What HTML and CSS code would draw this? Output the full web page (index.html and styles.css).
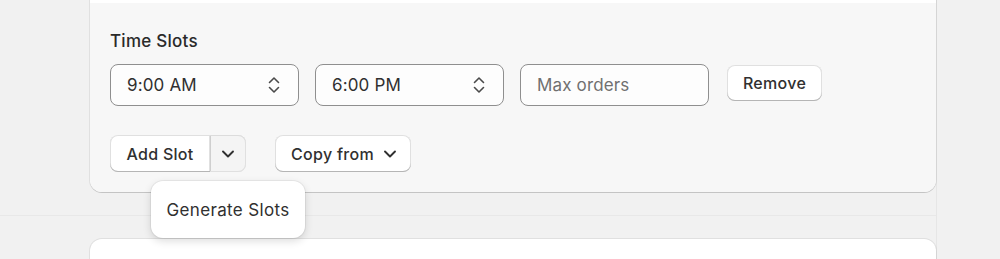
FILE: index.html
```html
<!DOCTYPE html>
<html>
<head>
<meta charset="utf-8">
<link rel="stylesheet" href="styles.css">
</head>
<body>
<div class="page">
  <section class="card card-first">
    <div class="card-top"></div>
    <div class="card-section">
      <div class="label">Time Slots</div>
      <div class="slot-row">
        <div class="select">
          <span>9:00 AM</span>
          <svg class="updown" viewBox="0 0 20 20" width="20" height="20"><path d="M5.5 7.5 10 3l4.5 4.5M5.5 12.5 10 17l4.5-4.5" fill="none" stroke="#4a4a4a" stroke-width="1.6" stroke-linecap="round" stroke-linejoin="round"/></svg>
        </div>
        <div class="select">
          <span>6:00 PM</span>
          <svg class="updown" viewBox="0 0 20 20" width="20" height="20"><path d="M5.5 7.5 10 3l4.5 4.5M5.5 12.5 10 17l4.5-4.5" fill="none" stroke="#4a4a4a" stroke-width="1.6" stroke-linecap="round" stroke-linejoin="round"/></svg>
        </div>
        <div class="input"><span class="placeholder">Max orders</span></div>
        <button class="btn btn-remove">Remove</button>
      </div>
      <div class="action-row">
        <div class="btn-group">
          <button class="btn btn-main">Add Slot</button>
          <button class="btn btn-disclosure">
            <svg viewBox="0 0 20 20" width="20" height="20"><path d="M5 7.5l5 5 5-5" fill="none" stroke="#303030" stroke-width="1.9" stroke-linecap="round" stroke-linejoin="round"/></svg>
          </button>
          <div class="popover">Generate Slots</div>
        </div>
        <button class="btn btn-copy">Copy from
          <svg viewBox="0 0 20 20" width="20" height="20"><path d="M5 7.5l5 5 5-5" fill="none" stroke="#303030" stroke-width="1.9" stroke-linecap="round" stroke-linejoin="round"/></svg>
        </button>
      </div>
    </div>
  </section>
  <div class="divider"></div>
  <section class="card card-second"></section>
</div>
</body>
</html>
```
FILE: styles.css
```css
* { box-sizing: border-box; }
html, body { margin: 0; padding: 0; }
body {
  background: #f1f1f1;
  font-family: Inter, "Noto Sans", sans-serif;
  color: #303030;
  height: 259px;
  overflow: hidden;
}
.page {
  width: 937px;
  border-right: 1px solid #e6e6e6;
  height: 259px;
}
.card {
  margin-left: 90px;
  width: 846px;
  background: #ffffff;
  border-radius: 12px;
  box-shadow: 0 0 0 1px rgba(0,0,0,0.07), 0 1px 0 0 rgba(0,0,0,0.12);
}
.card-first {
  border-radius: 0 0 12px 12px;
}
.card-top { height: 3px; background: #fff; }
.card-section {
  background: #f7f7f7;
  border-radius: 0 0 12px 12px;
  padding: 28px 20px 20px 20px;
}
.label {
  font-size: 17px;
  line-height: 20px;
  font-weight: 550;
  letter-spacing: 0.25px;
  margin-bottom: 13px;
  color: #2a2a2a;
}
.slot-row {
  display: flex;
  align-items: flex-start;
  gap: 16px;
}
.select, .input {
  width: 189px;
  height: 42px;
  background: #fdfdfd;
  border: 1px solid #8f8f8f;
  border-radius: 8px;
  display: flex;
  align-items: center;
  justify-content: space-between;
  padding: 0 16px 0 16px;
  font-size: 17px;
  letter-spacing: 0.15px;
  color: #303030;
}
.updown { margin-right: -2px; }
.placeholder { color: #707070; }
.btn {
  font-family: inherit;
  background: #fff;
  border: none;
  border-radius: 8px;
  color: #303030;
  font-size: 16px;
  font-weight: 550;
  letter-spacing: 0.3px;
  height: 37px;
  padding: 0 16px;
  box-shadow: inset 0 -1px 0 0 #b5b5b5, inset 0 0 0 1px rgba(0,0,0,0.12);
  display: inline-flex;
  align-items: center;
  cursor: pointer;
}
.btn-remove {
  margin-left: 2px;
  margin-top: 1px;
  height: 36px;
  width: 95px;
  justify-content: center;
  padding: 0;
}
.action-row {
  display: flex;
  gap: 29px;
  margin-top: 29px;
}
.btn-group {
  position: relative;
  display: flex;
}
.btn-main {
  border-radius: 8px 0 0 8px;
  width: 100px;
  justify-content: center;
  padding: 0;
}
.btn-disclosure {
  border-radius: 0 8px 8px 0;
  width: 36px;
  padding: 0;
  justify-content: center;
  background: #f4f4f4;
  box-shadow: inset 0 1px 0 0 #dcdcdc, inset -1px 0 0 0 #e0e0e0, inset 0 -1px 0 0 #e0e0e0, inset 1px 0 0 0 #cfcfcf;
}
.btn-copy {
  width: 136px;
  padding: 0 0 0 16px;
  gap: 6px;
}
.popover {
  position: absolute;
  left: 41px;
  top: 46px;
  width: 154px;
  height: 57px;
  background: #fff;
  border-radius: 12px;
  box-shadow: 0 0 0 1px rgba(0,0,0,0.05), 0 3px 8px rgba(0,0,0,0.14);
  font-size: 17px;
  letter-spacing: 0.35px;
  display: flex;
  align-items: center;
  justify-content: center;
  white-space: nowrap;
  z-index: 2;
}
.divider {
  height: 1px;
  background: #e8e8e8;
  margin: 23px 0 23px 0;
}
.card-second {
  height: 20px;
  border-radius: 12px 12px 0 0;
}
```
